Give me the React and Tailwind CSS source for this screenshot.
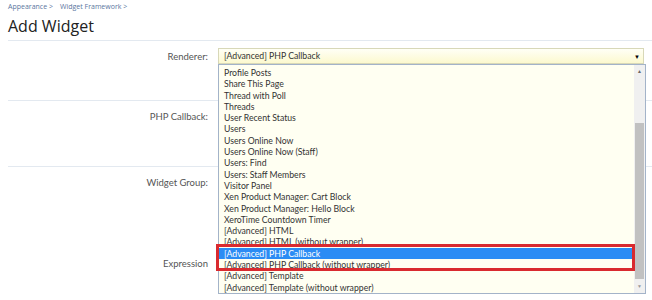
import React from "react";

const items = [
  "Profile Posts",
  "Share This Page",
  "Thread with Poll",
  "Threads",
  "User Recent Status",
  "Users",
  "Users Online Now",
  "Users Online Now (Staff)",
  "Users: Find",
  "Users: Staff Members",
  "Visitor Panel",
  "Xen Product Manager: Cart Block",
  "Xen Product Manager: Hello Block",
  "XeroTime Countdown Timer",
  "[Advanced] HTML",
  "[Advanced] HTML (without wrapper)",
  "[Advanced] PHP Callback",
  "[Advanced] PHP Callback (without wrapper)",
  "[Advanced] Template",
  "[Advanced] Template (without wrapper)",
];

const lato = { fontFamily: 'Lato, "Open Sans", sans-serif' };

function Row({ label, h, labelPt }) {
  return (
    <div className={`flex border-t border-[#e3e9f0] ml-2 ${h}`}>
      <div className={`w-[200px] text-right text-[9.5px] text-[#555] ${labelPt}`} style={lato}>
        {label}
      </div>
      <div className="flex-1 pl-[10px]" />
    </div>
  );
}

export default function App() {
  return (
    <div
      className="relative w-[652px] h-[300px] overflow-hidden bg-white"
      style={{ fontFamily: '"Open Sans", "Noto Sans", sans-serif' }}
    >
      <div className="h-[14px] pl-2 pt-[2px] text-[7px] text-[#5a76a0] flex gap-[7px]">
        <span>Appearance &gt;</span>
        <span>Widget Framework &gt;</span>
      </div>
      <h1 className="h-[26px] pl-2 text-[16px] leading-[24px] text-[#222]">Add Widget</h1>

      <div className="flex border-t border-[#e3e9f0] ml-2 h-[60px]">
        <div className="w-[200px] text-right text-[9.5px] text-[#555] pt-[9px]" style={lato}>
          Renderer:
        </div>
        <div className="relative flex-1 pl-[10px] pr-[8px] pt-[7px]" style={lato}>
          <div className="flex items-center justify-between h-[16px] border border-[#d8d8b8] bg-gradient-to-b from-[#fffff6] to-[#fcf9cf] pl-[5px] pr-[3px] text-[8.7px] text-[#333]">
            <span>[Advanced] PHP Callback</span>
            <span className="text-[6px] text-black">▼</span>
          </div>
          <div className="absolute left-[10px] right-[6px] top-[23px] h-[230px] border border-[#a3b3c9] bg-[#fffff2] flex z-10">
            <div className="flex-1 pt-[2px] flex flex-col">
              {items.map((it) => (
                <div
                  key={it}
                  className={`h-[11.3px] leading-[11.3px] pl-[5px] text-[8.7px] whitespace-nowrap ${
                    it === "[Advanced] PHP Callback" ? "bg-[#2b8cf4] text-white" : "text-[#333]"
                  }`}
                >
                  {it}
                </div>
              ))}
            </div>
            <div className="w-[11px] bg-[#f0f0f0] flex flex-col items-center">
              <div className="h-[14px] flex items-center justify-center text-[5px] text-[#666]">▲</div>
              <div className="h-[44px]" />
              <div className="w-[9px] h-[156px] bg-[#c1c1c1]" />
              <div className="flex-1 flex items-end justify-center pb-[3px] text-[5px] text-[#999]">▼</div>
            </div>
          </div>
        </div>
      </div>

      <Row label="PHP Callback:" h="h-[66px]" labelPt="pt-[9px]" />
      <Row label="Widget Group:" h="h-[66px]" labelPt="pt-[9px]" />
      <div className="flex ml-2 h-[60px]">
        <div className="w-[200px] text-right text-[9.5px] text-[#555] pt-[25px]" style={lato}>
          Expression
        </div>
      </div>

      <div className="absolute left-[216px] top-[244px] w-[419px] h-[27px] border-[3px] border-[#d92a2f] z-20" />
    </div>
  );
}
